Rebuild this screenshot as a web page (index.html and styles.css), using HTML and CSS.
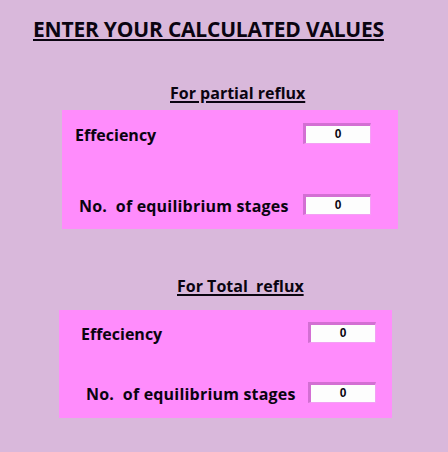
FILE: index.html
```html
<!DOCTYPE html>
<html>
<head>
<meta charset="utf-8">
<link rel="stylesheet" href="styles.css">
</head>
<body>
<div class="page">
  <h1 class="title">ENTER YOUR CALCULATED VALUES</h1>

  <h2 class="sub sub-partial">For partial reflux</h2>
  <div class="panel panel-partial">
    <div class="row row-eff">
      <span class="label">Effeciency</span>
      <div class="field">0</div>
    </div>
    <div class="row row-stages">
      <span class="label label-stages">No.&nbsp; of equilibrium stages</span>
      <div class="field">0</div>
    </div>
  </div>

  <h2 class="sub sub-total">For Total&nbsp; reflux</h2>
  <div class="panel panel-total">
    <div class="row row-eff">
      <span class="label">Effeciency</span>
      <div class="field">0</div>
    </div>
    <div class="row row-stages">
      <span class="label label-stages">No.&nbsp; of equilibrium stages</span>
      <div class="field">0</div>
    </div>
  </div>
</div>
</body>
</html>
```

FILE: styles.css
```css
html, body {
  margin: 0;
  padding: 0;
  background: #d9b8db;
}
body {
  width: 448px;
  height: 452px;
  overflow: hidden;
  font-family: "Open Sans", "Liberation Sans", sans-serif;
  color: #0a0410;
}
.page {
  display: flex;
  flex-direction: column;
  align-items: flex-start;
}
.title {
  margin: 16px 0 0 33px;
  font-size: 21px;
  font-weight: 700;
  line-height: 26px;
  text-decoration: underline;
  text-underline-offset: 2px;
  text-decoration-thickness: 2px;
  letter-spacing: -0.2px;
}
.sub {
  font-size: 16px;
  font-weight: 700;
  line-height: 20px;
  text-decoration: underline;
  text-underline-offset: 2px;
  text-decoration-thickness: 2px;
  margin: 0;
}
.sub-partial {
  margin: 41px 0 0 170px;
}
.sub-total {
  margin: 47px 0 0 177px;
}
.panel {
  background: #ff8cfc;
  display: flex;
  flex-direction: column;
  box-sizing: border-box;
}
.panel-partial {
  margin: 7px 0 0 62px;
  width: 336px;
  height: 119px;
  padding: 13px 27px 0 13px;
}
.panel-total {
  margin: 14px 0 0 59px;
  width: 333px;
  height: 108px;
  padding: 12px 16px 0 22px;
}
.row {
  display: flex;
  align-items: center;
  justify-content: space-between;
  height: 21px;
}
.row-stages {
  margin-top: 50px;
  padding-left: 4px;
}
.panel-total .row-stages {
  margin-top: 39px;
  padding-left: 5px;
}
.label {
  font-size: 16px;
  font-weight: 700;
  line-height: 21px;
  padding-top: 3px;
}
.label-stages {
  letter-spacing: 0.2px;
}
.field {
  width: 68px;
  height: 21px;
  box-sizing: border-box;
  background: #fdfdfd;
  border-top: 3px solid #d36fd3;
  border-left: 3px solid #d36fd3;
  border-right: 1px solid #f4a0f4;
  border-bottom: 1px solid #f4a0f4;
  font-family: "Liberation Sans", sans-serif;
  font-size: 12px;
  font-weight: 700;
  line-height: 17px;
  text-align: center;
}
```
